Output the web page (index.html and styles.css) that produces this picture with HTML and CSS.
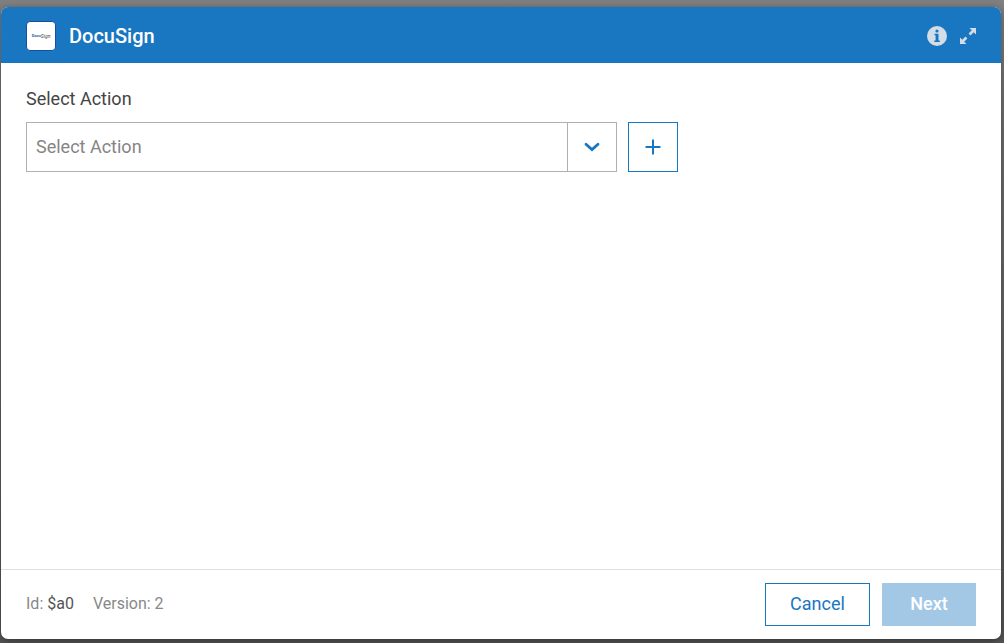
FILE: index.html
```html
<!DOCTYPE html>
<html lang="en">
<head>
  <meta charset="UTF-8" />
  <meta name="viewport" content="width=device-width, initial-scale=1" />
  <title>DocuSign</title>
  <link rel="stylesheet" href="styles.css">
</head>
<body>

  <div class="modal" role="dialog" aria-labelledby="modalTitle">
    <header class="modal-header">
      <span class="app-logo" aria-hidden="true"><span class="logo-docu">Docu</span><span class="logo-sign">Sign</span></span>
      <h1 id="modalTitle" class="modal-title">DocuSign</h1>
      <button type="button" class="icon-btn" aria-label="Information">
        <svg width="20" height="20" viewBox="0 0 20 20">
          <circle cx="10" cy="10" r="10" fill="#d2dde7" />
          <circle cx="10" cy="5" r="1.6" fill="#1976c1" />
          <path d="M7.5 7.7h4v6.8h1.3V16H7.3v-1.5h1.3V9.200H7.5z" fill="#1976c1" />
        </svg>
      </button>
      <button type="button" class="icon-btn" aria-label="Expand">
        <svg width="16" height="16" viewBox="0 0 16 16" fill="#d2dde7">
          <path d="M9.5 0H16v6.5l-2.300-2.300-3.200 3.200-1.900-1.900 3.200-3.200z" />
          <path d="M6.5 16H0V9.5l2.300 2.300 3.200-3.200 1.900 1.900-3.200 3.200z" />
        </svg>
      </button>
    </header>

    <main class="modal-body">
      <label class="field-label" for="actionInput">Select Action</label>
      <div class="field-row">
        <div class="combo">
          <input type="text" id="actionInput" class="combo-input" placeholder="Select Action" />
          <button type="button" class="combo-toggle" aria-label="Show actions">
            <svg width="16" height="10" viewBox="0 0 16 10" fill="none" stroke="#1976c1" stroke-width="2.8" stroke-linecap="round">
              <path d="M2 2.200L8 7.600l6-5.400" />
            </svg>
          </button>
        </div>
        <button type="button" class="add-btn" aria-label="Add action">
          <svg width="16" height="16" viewBox="0 0 16 16" fill="none" stroke="#1976c1" stroke-width="2">
            <path d="M8 0.5v15M0.5 8h15" />
          </svg>
        </button>
      </div>
    </main>

    <footer class="modal-footer">
      <span class="meta">Id: <span class="meta-value">$a0</span></span>
      <span class="meta">Version: 2</span>
      <div class="actions">
        <button type="button" class="btn btn-outline">Cancel</button>
        <button type="button" class="btn btn-primary" disabled>Next</button>
      </div>
    </footer>
  </div>

</body>
</html>
```

FILE: styles.css
```css
* {
  box-sizing: border-box;
}

body {
  margin: 0;
  min-height: 100vh;
  padding: 7px 3px 4px 1px;
  display: flex;
  background: linear-gradient(#808080, #707070 20%, #555);
  font-family: Roboto, sans-serif;
  font-size: 18px;
  color: #444;
}

button,
input {
  font: inherit;
}

button {
  cursor: pointer;
}

.modal {
  flex: 1;
  display: flex;
  flex-direction: column;
  overflow: hidden;
  background: #fff;
  border-radius: 7px;
  box-shadow: 0 2px 8px rgba(0, 0, 0, 0.4);
}

.modal-header {
  display: flex;
  align-items: center;
  gap: 13px;
  height: 56px;
  padding: 2px 25px 0;
  background: #1976c1;
  color: #fff;
}

.app-logo {
  display: flex;
  align-items: center;
  justify-content: center;
  width: 30px;
  height: 30px;
  background: #fff;
  border: 1px solid #164fa0;
  border-radius: 4px;
  font-size: 4px;
  line-height: 8px;
}

.logo-docu {
  color: #2f5ea8;
  font-weight: 700;
}

.logo-sign {
  color: #444;
  font-size: 5px;
  font-style: italic;
}

.modal-title {
  flex: 1;
  margin: 0;
  font-size: 20px;
  font-weight: 500;
  line-height: 24px;
}

.icon-btn {
  display: flex;
  padding: 0;
  border: 0;
  background: none;
}

.modal-body {
  flex: 1;
  padding: 24px 25px;
}

.field-label {
  display: block;
  margin-bottom: 11px;
  line-height: 24px;
}

.field-row {
  display: flex;
  gap: 11px;
  max-width: 652px;
}

.combo {
  flex: 1;
  display: flex;
  height: 50px;
  border: 1px solid #b0b0b0;
}

.combo-input {
  flex: 1;
  min-width: 0;
  padding: 0 9px 2px;
  border: 0;
  outline: none;
  color: #444;
}

.combo-input::placeholder {
  color: #858585;
}

.combo-toggle {
  display: flex;
  align-items: center;
  justify-content: center;
  width: 49px;
  padding: 0;
  border: 0;
  border-left: 1px solid #b0b0b0;
  background: #fff;
}

.add-btn {
  display: flex;
  align-items: center;
  justify-content: center;
  width: 50px;
  height: 50px;
  padding: 0;
  border: 1px solid #1976c1;
  background: #fff;
}

.modal-footer {
  display: flex;
  align-items: center;
  gap: 19px;
  padding: 13px 25px;
  border-top: 1px solid #e0e0e0;
}

.meta {
  padding-bottom: 2px;
  font-size: 16px;
  line-height: 20px;
  color: #888;
}

.meta-value {
  color: #555;
}

.actions {
  display: flex;
  gap: 12px;
  margin-left: auto;
}

.btn {
  height: 43px;
  padding: 0 12px 2px;
  border: 1px solid #1976c1;
}

.btn-outline {
  min-width: 105px;
  background: #fff;
  color: #1976c1;
}

.btn-primary {
  min-width: 94px;
  border-color: #a3c8e6;
  background: #a3c8e6;
  color: #fff;
  font-weight: 500;
}
```
